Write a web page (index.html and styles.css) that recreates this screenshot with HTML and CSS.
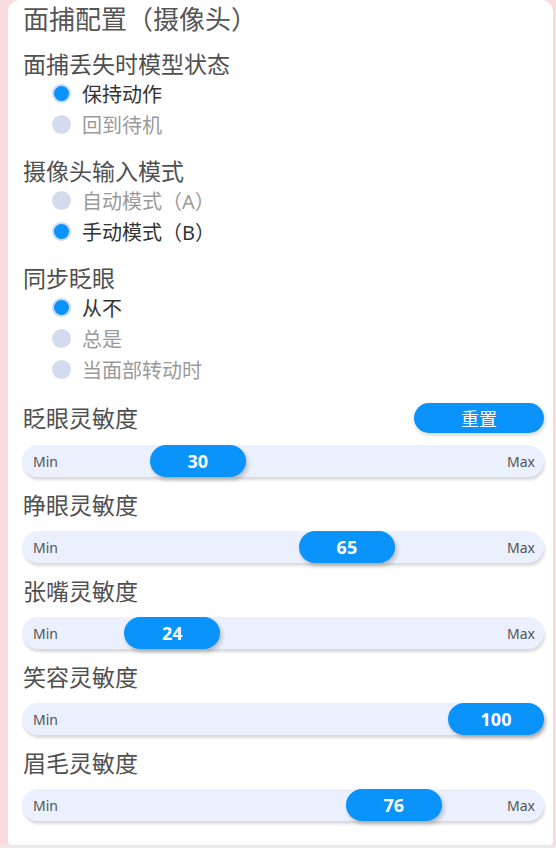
FILE: index.html
```html
<!DOCTYPE html>
<html lang="zh-CN">
  <head>
    <meta charset="UTF-8" />
    <meta name="viewport" content="width=device-width, initial-scale=1.0" />
    <title>面捕配置</title>
    <link rel="stylesheet" href="styles.css">
  </head>
  <body>
    <div class="panel">
      <h1 class="title">面捕配置（摄像头）</h1>

      <!-- 面捕丢失时 -->
      <div class="group">
        <h2 class="heading">面捕丢失时模型状态</h2>
        <ul class="radios">
          <li class="radio checked"><span class="dot"></span>保持动作</li>
          <li class="radio"><span class="dot"></span>回到待机</li>
        </ul>
      </div>

      <!-- 输入模式 -->
      <div class="group">
        <h2 class="heading">摄像头输入模式</h2>
        <ul class="radios">
          <li class="radio"><span class="dot"></span>自动模式（A）</li>
          <li class="radio checked"><span class="dot"></span>手动模式（B）</li>
        </ul>
      </div>

      <!-- 眨眼 -->
      <div class="group">
        <h2 class="heading">同步眨眼</h2>
        <ul class="radios">
          <li class="radio checked"><span class="dot"></span>从不</li>
          <li class="radio"><span class="dot"></span>总是</li>
          <li class="radio"><span class="dot"></span>当面部转动时</li>
        </ul>
      </div>

      <!-- 灵敏度 -->
      <div class="sliders">
        <div class="slider-block">
          <div class="slider-head">
            <h2 class="heading">眨眼灵敏度</h2>
            <button class="reset">重置</button>
          </div>
          <div class="slider">
            <span class="min">Min</span>
            <span class="max">Max</span>
            <span class="thumb" style="left: calc((100% - 96px) * 0.30)">30</span>
          </div>
        </div>
        <div class="slider-block">
          <h2 class="heading">睁眼灵敏度</h2>
          <div class="slider">
            <span class="min">Min</span>
            <span class="max">Max</span>
            <span class="thumb" style="left: calc((100% - 96px) * 0.65)">65</span>
          </div>
        </div>
        <div class="slider-block">
          <h2 class="heading">张嘴灵敏度</h2>
          <div class="slider">
            <span class="min">Min</span>
            <span class="max">Max</span>
            <span class="thumb" style="left: calc((100% - 96px) * 0.24)">24</span>
          </div>
        </div>
        <div class="slider-block">
          <h2 class="heading">笑容灵敏度</h2>
          <div class="slider">
            <span class="min">Min</span>
            <span class="thumb" style="left: calc((100% - 96px) * 1)">100</span>
          </div>
        </div>
        <div class="slider-block">
          <h2 class="heading">眉毛灵敏度</h2>
          <div class="slider">
            <span class="min">Min</span>
            <span class="max">Max</span>
            <span class="thumb" style="left: calc((100% - 96px) * 0.76)">76</span>
          </div>
        </div>
      </div>
    </div>
  </body>
</html>
```

FILE: styles.css
```css
html {
  background: #e9e9e9;
}
body {
  margin: 0;
  height: 845px;
  background: #f8dcdc; /* pink backdrop behind the panel */
  font-family: "Noto Sans", "Noto Sans CJK SC", sans-serif;
  color: #555;
}
.panel {
  margin-left: 8px;
  width: 545px;
  height: 845px;
  box-sizing: border-box;
  padding: 0 9px 0 14px;
  background: #fff;
  border-radius: 12px 12px 4px 4px;
  overflow: hidden;
}
.title {
  margin: 3px 0 0 1px;
  font-size: 26px;
  line-height: 32px;
  font-weight: 400;
  color: #555;
}
.heading {
  margin: 0 0 0 1px;
  font-size: 23px;
  line-height: 28px;
  font-weight: 400;
  color: #4f4f4f;
}
.group {
  margin-top: 17px;
}
.group:first-of-type {
  margin-top: 15px;
}
.radios {
  list-style: none;
  margin: 0;
  padding: 0 0 0 30px;
}
.radio {
  display: flex;
  align-items: center;
  gap: 11px;
  height: 31px;
  font-size: 20px;
  color: #9a9a9a;
}
.radio.checked {
  color: #333;
}
.dot {
  width: 19px;
  height: 19px;
  border-radius: 50%;
  box-sizing: border-box;
  background: #d2dcec;
}
.radio.checked .dot {
  background: #0a93fa;
  border: 2px solid #cdd7f2;
}
.sliders {
  margin-top: 18px;
}
.slider-block {
  margin-bottom: 14px;
}
.slider-head {
  display: flex;
  align-items: center;
  justify-content: space-between;
}
.reset {
  width: 130px;
  height: 30px;
  border: none;
  border-radius: 15px;
  background: #0a93fa;
  color: #fff;
  font-family: "Noto Sans CJK SC", sans-serif;
  font-size: 18px;
  box-shadow: 1px 2px 4px rgba(0, 0, 0, 0.18);
  cursor: pointer;
}
.slider {
  position: relative;
  margin-top: 12px;
  height: 32px;
  border-radius: 16px;
  background: #eaf0fd;
  box-shadow: 1px 3px 3px rgba(0, 0, 0, 0.15);
  display: flex;
  align-items: center;
  justify-content: space-between;
  padding: 0 9px 0 11px;
  font-size: 14px;
  color: #555;
}
.thumb {
  position: absolute;
  top: 0;
  width: 96px;
  height: 32px;
  border-radius: 16px;
  background: #0a93fa;
  color: #fff;
  font-size: 18px;
  font-weight: 700;
  line-height: 32px;
  text-align: center;
  box-shadow: 2px 3px 4px rgba(0, 0, 0, 0.22);
}
```
